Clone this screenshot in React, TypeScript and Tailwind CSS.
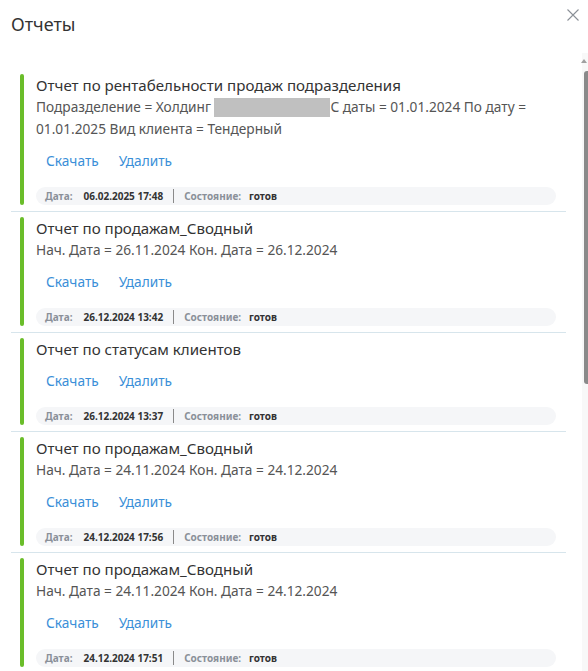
type Report = {
  title: string
  params?: React.ReactNode
  date: string
}

const reports: Report[] = [
  {
    title: 'Отчет по рентабельности продаж подразделения',
    params: (
      <>
        Подразделение = Холдинг{' '}
        <span className="inline-block w-[116px] h-[19px] align-[-5px] bg-[#c0c0c0]" />
        С даты = 01.01.2024 По дату = 01.01.2025 Вид клиента = Тендерный
      </>
    ),
    date: '06.02.2025 17:48',
  },
  {
    title: 'Отчет по продажам_Сводный',
    params: 'Нач. Дата = 26.11.2024 Кон. Дата = 26.12.2024',
    date: '26.12.2024 13:42',
  },
  {
    title: 'Отчет по статусам клиентов',
    date: '26.12.2024 13:37',
  },
  {
    title: 'Отчет по продажам_Сводный',
    params: 'Нач. Дата = 24.11.2024 Кон. Дата = 24.12.2024',
    date: '24.12.2024 17:56',
  },
  {
    title: 'Отчет по продажам_Сводный',
    params: 'Нач. Дата = 24.11.2024 Кон. Дата = 24.12.2024',
    date: '24.12.2024 17:51',
  },
]

function ReportCard({ report }: { report: Report }) {
  return (
    <div className="border-b border-[#d7e5ec] pt-[5px] pb-[6px] pl-[9px] pr-[10px]">
      <div className="flex">
        {/* зелёная полоса статуса */}
        <div className="w-[4px] shrink-0 rounded-full bg-[#6abd2a]" />
        <div className="ml-[12px] flex-1 min-w-0">
          <div className="text-[15.1px] leading-[22px] text-[#333]">{report.title}</div>
          {report.params && (
            <div className="text-[13.7px] leading-[22px] text-[#555] pr-[20px]">{report.params}</div>
          )}
          <div className="mt-[10px] flex text-[13.7px] leading-[22px] text-[#3a8fd8]">
            <button className="px-[10px]">Скачать</button>
            <button className="px-[10px]">Удалить</button>
          </div>
          <div className="mt-[15px] flex items-center h-[18px] rounded-full bg-[#f5f6f8] pl-[9px] text-[10px] font-bold">
            <span className="text-[#8a9099]">Дата:</span>
            <span className="ml-[11px] text-[#333]">{report.date}</span>
            <span className="mx-[10px] h-[14px] w-px bg-[#8a8a8a]" />
            <span className="text-[#8a9099]">Состояние:</span>
            <span className="ml-[8px] text-[#333]">готов</span>
          </div>
        </div>
      </div>
    </div>
  )
}

export default function App() {
  return (
    <div
      className="relative w-[588px] h-[671px] overflow-hidden bg-white"
      style={{ fontFamily: '"Noto Sans", "Open Sans", sans-serif' }}
    >
      {/* шапка */}
      <div className="flex items-center justify-between h-[53px] pl-[11px] pr-[9px] pb-[4px]">
        <h2 className="text-[18px] text-[#333]">Отчеты</h2>
        <button className="self-start mt-[9px] text-[#8b9097]">
          <svg width="12" height="12" viewBox="0 0 12 12" fill="none" stroke="currentColor" strokeWidth="1.1">
            <path d="M0.5 0.5 L11.5 11.5 M11.5 0.5 L0.5 11.5" />
          </svg>
        </button>
      </div>

      {/* список */}
      <div className="flex h-[618px]">
        <div className="flex-1 pl-[11px] pt-[16px] pr-[16px]">
          {reports.map((r, i) => (
            <ReportCard key={i} report={r} />
          ))}
        </div>
        {/* полоса прокрутки */}
        <div className="w-[6px] bg-[#f8f8f8] flex flex-col items-end">
          <div className="mt-[6px] mr-[1px] w-0 h-0 border-l-[3px] border-r-[3px] border-b-[4px] border-l-transparent border-r-transparent border-b-[#a0a0a0]" />
          <div className="mt-[8px] w-[4px] h-[313px] rounded-l-[3px] bg-[#8a8a8a]" />
        </div>
      </div>
    </div>
  )
}
